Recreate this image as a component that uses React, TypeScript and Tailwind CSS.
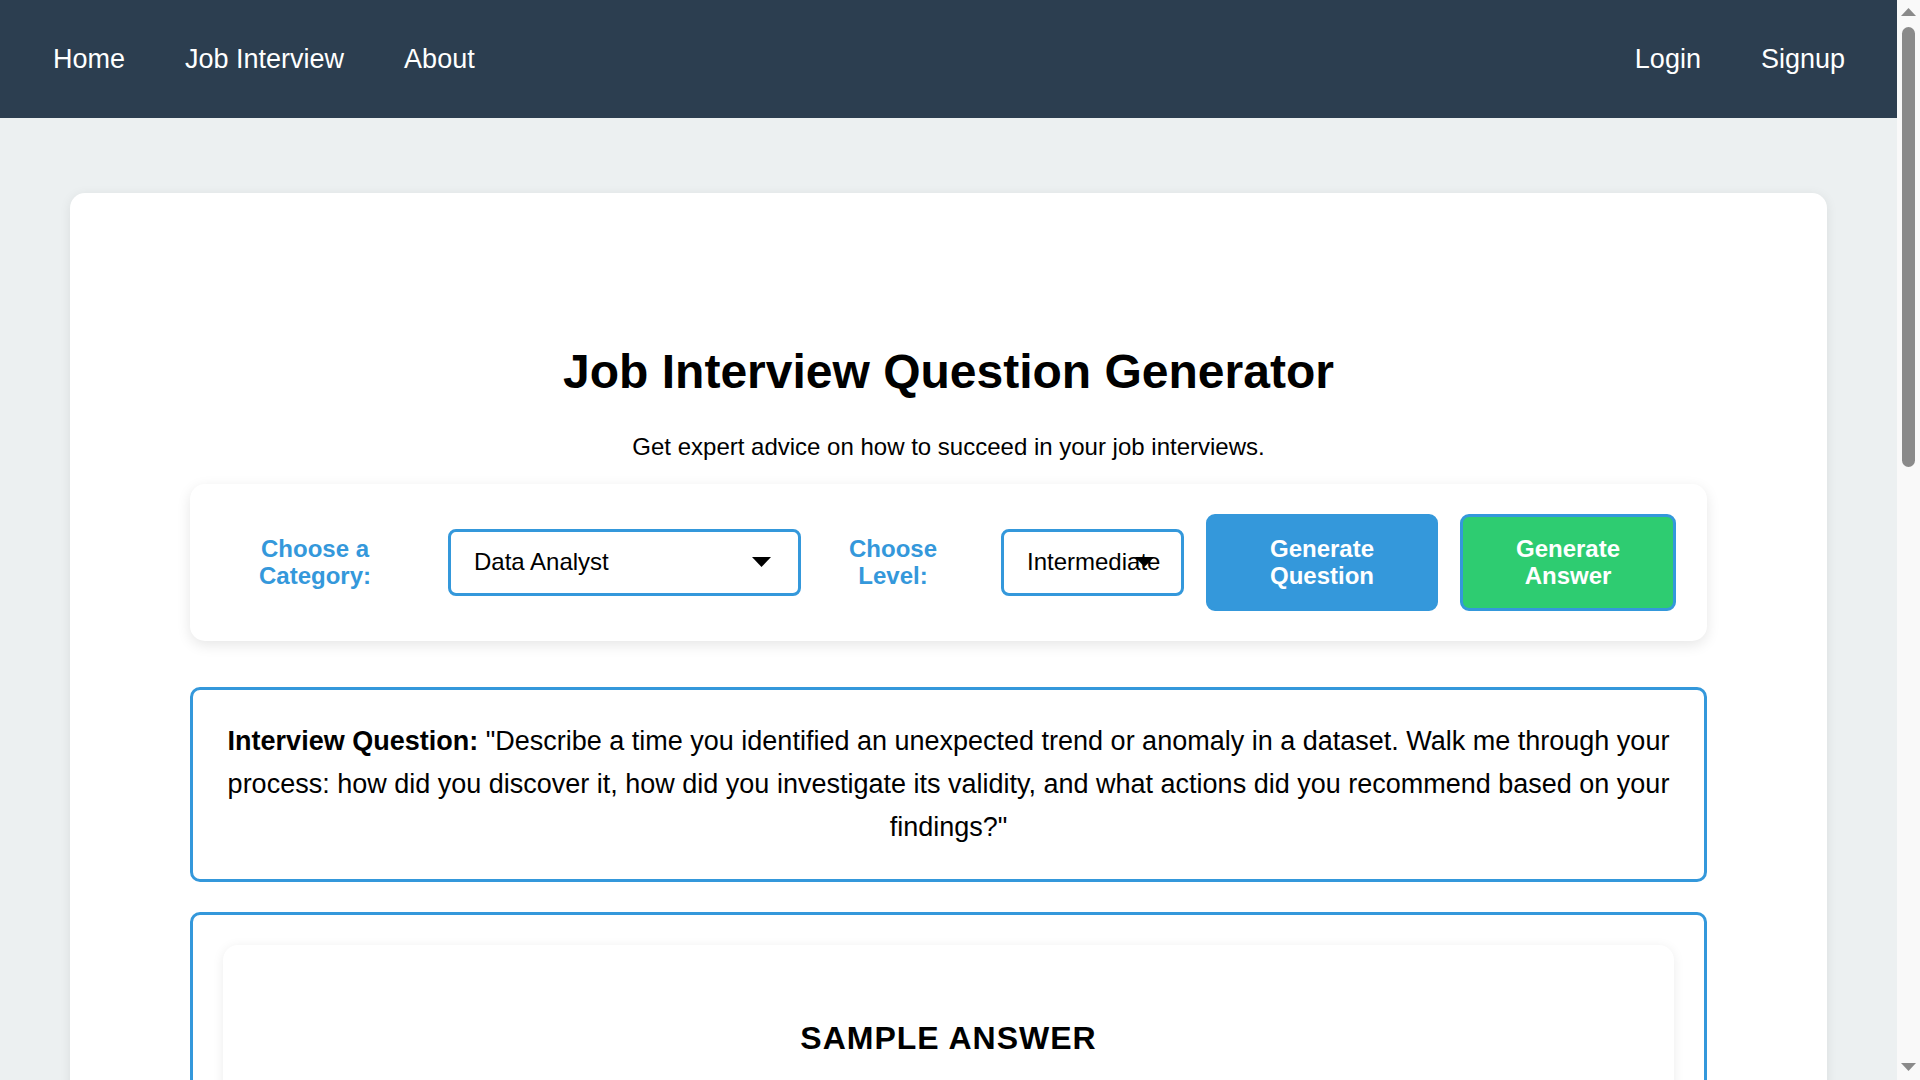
import React from 'react';

const navLeft = ['Home', 'Job Interview', 'About'];
const navRight = ['Login', 'Signup'];

const Caret = () => (
  <svg
    width="19"
    height="10"
    viewBox="0 0 19 10"
    className="absolute right-[27px] top-1/2 -translate-y-1/2"
  >
    <path d="M0 0h19L9.5 10z" fill="#000" />
  </svg>
);

const FakeSelect = ({ value, width }: { value: string; width: string }) => (
  <div
    className={`relative flex h-[67px] shrink-0 items-center overflow-hidden rounded-[8px] border-[3px] border-[#3498db] bg-white pl-[23px] text-[24px] whitespace-nowrap text-black ${width}`}
  >
    <span>{value}</span>
    <Caret />
  </div>
);

// the browser's scrollbar, drawn on top at the right edge
const Scrollbar = () => (
  <div className="fixed right-0 top-0 flex h-screen w-[23px] flex-col items-center bg-[#f9f9f9] pb-[9px] pt-[8px]">
    <svg width="15" height="8" viewBox="0 0 15 8">
      <path d="M7.5 0L15 8H0z" fill="#8a8a8a" />
    </svg>
    <div className="mt-[11px] h-[440px] w-[13px] rounded-full bg-[#8a8a8a]" />
    <div className="flex-1" />
    <svg width="15" height="8" viewBox="0 0 15 8">
      <path d="M0 0h15L7.5 8z" fill="#8a8a8a" />
    </svg>
  </div>
);

const App: React.FC = () => {
  return (
    <div className="min-h-screen bg-[#ecf0f1] pb-[70px] pr-[23px] font-['Liberation_Sans',Arial,sans-serif]">
      {/* Top bar */}
      <nav className="flex h-[118px] items-center justify-between bg-[#2c3e50] pl-[53px] pr-[52px] text-[27px] text-white">
        <div className="flex gap-[60px]">
          {navLeft.map(l => (
            <a key={l} className="cursor-pointer">{l}</a>
          ))}
        </div>
        <div className="flex gap-[60px]">
          {navRight.map(l => (
            <a key={l} className="cursor-pointer">{l}</a>
          ))}
        </div>
      </nav>

      {/* Main card */}
      <main className="mx-[70px] mt-[75px] rounded-[15px] bg-white px-[120px] pb-[60px] pt-[151px] shadow-[0_2px_12px_rgba(0,0,0,0.08)]">
        <h1 className="text-center text-[48px] font-bold leading-[1.15] text-black">
          Job Interview Question Generator
        </h1>
        <p className="mt-[34px] text-center text-[24px] leading-[1.15] text-black">
          Get expert advice on how to succeed in your job interviews.
        </p>

        {/* Controls */}
        <div className="mt-[23px] flex items-center gap-[22px] rounded-[15px] bg-white px-[30px] py-[30px] shadow-[0_4px_14px_rgba(0,0,0,0.1)]">
          <label className="mr-[16px] w-[190px] shrink-0 text-center text-[24px] font-bold leading-[1.15] text-[#3498db]">
            Choose a Category:
          </label>
          <FakeSelect value="Data Analyst" width="w-[353px]" />
          <label className="mr-[16px] w-[140px] shrink-0 text-center text-[24px] font-bold leading-[1.15] text-[#3498db]">
            Choose Level:
          </label>
          <FakeSelect value="Intermediate" width="w-[183px]" />
          <button className="h-[97px] w-[232px] shrink-0 rounded-[9px] border-[3px] border-[#3498db] bg-[#3498db] text-[24px] font-bold leading-[1.15] text-white">
            Generate
            <br />
            Question
          </button>
          <button className="h-[97px] w-[216px] shrink-0 rounded-[9px] border-[3px] border-[#3498db] bg-[#2ecc71] text-[24px] font-bold leading-[1.15] text-white">
            Generate
            <br />
            Answer
          </button>
        </div>

        {/* Question */}
        <div className="mt-[46px] rounded-[10px] border-[3px] border-[#3498db] p-[30px] text-center text-[27px] leading-[1.6] text-black">
          <strong>Interview Question:</strong> "Describe a time you identified an unexpected trend or anomaly in a dataset.
          Walk me through your process: how did you discover it, how did you investigate its validity, and what actions
          did you recommend based on your findings?"
        </div>

        {/* Answer */}
        <div className="mt-[30px] rounded-[10px] border-[3px] border-[#3498db] p-[30px]">
          <div className="min-h-[1458px] rounded-[15px] bg-white px-[40px] pb-[40px] pt-[75px] shadow-[0_2px_12px_rgba(0,0,0,0.08)]">
            <h2 className="text-center text-[32px] font-bold leading-[1.15] tracking-[1px] text-black">
              SAMPLE ANSWER
            </h2>
            <div className="mt-[90px] space-y-[24px] text-[24px] leading-[1.7] text-black">
              <p>
                <strong>Situation:</strong> In my previous role, I was reviewing weekly sales dashboards when I noticed a
                sudden spike in returns for one product category in a single region.
              </p>
              <p>
                <strong>Task:</strong> I needed to determine whether the spike reflected a real business problem or an
                issue with the underlying data.
              </p>
              <p>
                <strong>Action:</strong> I cross-checked the figures against the raw transaction logs, segmented the data
                by store and date, and met with the regional team to validate what I found.
              </p>
              <p>
                <strong>Result:</strong> We traced the issue to a faulty batch from one supplier. I recommended a recall
                and an automated alert for unusual return rates, which reduced losses the following quarter.
              </p>
            </div>
          </div>
        </div>
      </main>

      <Scrollbar />
    </div>
  );
};

export default App;
